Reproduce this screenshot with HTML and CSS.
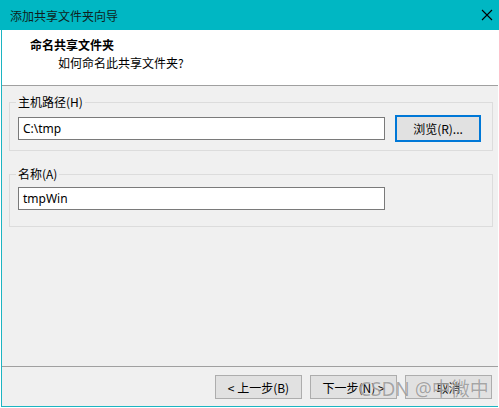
FILE: index.html
```html
<!DOCTYPE html>
<html lang="zh-CN">
<head>
<meta charset="utf-8">
<title>添加共享文件夹向导</title>
<link rel="stylesheet" href="styles.css">
</head>
<body>
<div class="window">
  <div class="titlebar">
    <span class="title">添加共享文件夹向导</span>
    <svg class="close" width="12" height="12" viewBox="0 0 12 12"><path d="M1 1L11 11M11 1L1 11" stroke="#000" stroke-width="1.1" fill="none"/></svg>
  </div>
  <div class="frame">
    <div class="header">
      <div class="heading">命名共享文件夹</div>
      <div class="sub">如何命名此共享文件夹?</div>
    </div>
    <div class="content">
      <fieldset class="group">
        <legend>主机路径(H)</legend>
        <div class="row">
          <div class="input">C:\tmp</div>
          <button class="btn browse">浏览(R)...</button>
        </div>
      </fieldset>
      <fieldset class="group group2">
        <legend>名称(A)</legend>
        <div class="row">
          <div class="input">tmpWin</div>
        </div>
      </fieldset>
    </div>
    <div class="footer">
      <button class="btn">&lt; 上一步(B)</button>
      <button class="btn">下一步(N) &gt;</button>
      <button class="btn">取消</button>
      <span class="watermark">CSDN @中微中</span>
    </div>
  </div>
</div>
</body>
</html>
```
FILE: styles.css
```css
html, body {
  margin: 0;
  padding: 0;
  background: #ffffff;
}
body {
  width: 499px;
  height: 408px;
  overflow: hidden;
  font-family: "Noto Sans CJK SC", "Noto Sans", sans-serif;
  font-size: 12px;
  color: #000;
}
.window {
  display: flex;
  flex-direction: column;
  height: 407px;
}
.titlebar {
  height: 30px;
  background: #00b7c3;
  display: flex;
  align-items: center;
  justify-content: space-between;
  padding: 0 6px 0 10px;
  box-sizing: border-box;
}
.title {
  font-size: 12px;
  color: #0f1f20;
}
.close {
  display: block;
}
.frame {
  flex: 1;
  display: flex;
  flex-direction: column;
  margin-left: 1px;
  margin-right: 1px;
  border-left: 1px solid #1cb4c2;
  border-bottom: 1px solid #1cb4c2;
  background: #f0f0f0;
}
.header {
  height: 56px;
  box-sizing: border-box;
  background: #fff;
  border-bottom: 1px solid #a0a0a0;
  padding: 6px 0 0 28px;
}
.heading {
  font-weight: bold;
  line-height: 18px;
}
.sub {
  padding-left: 28px;
  line-height: 17px;
}
.content {
  flex: 1;
  padding: 8px 5px 0 7px;
  display: flex;
  flex-direction: column;
  gap: 15px;
}
.group {
  margin: 0;
  border: 1px solid #dcdcdc;
  padding: 0 10px 8px 8px;
  min-width: 0;
}
.group legend {
  padding: 0 2px;
  margin-left: -2px;
  line-height: 16px;
}
.row {
  display: flex;
  align-items: center;
  gap: 10px;
  padding-top: 5px;
}
.group2 .row {
  padding-bottom: 8px;
}
.input {
  width: 367px;
  height: 23px;
  box-sizing: border-box;
  border: 1px solid #7a7a7a;
  background: #fff;
  padding: 0 4px;
  line-height: 21px;
  font-family: "Noto Sans", "Noto Sans CJK SC", sans-serif;
  font-size: 12px;
}
.btn {
  width: 87px;
  height: 24px;
  box-sizing: border-box;
  background: #e1e1e1;
  border: 1px solid #adadad;
  font-family: "Noto Sans CJK SC", "Noto Sans", sans-serif;
  font-size: 12px;
  color: #000;
  padding: 0;
  margin: 0;
}
.browse {
  width: 86px;
  height: 27px;
  border: 2px solid #0078d7;
}
.footer {
  position: relative;
  height: 40px;
  box-sizing: border-box;
  border-top: 1px solid #a0a0a0;
  display: flex;
  justify-content: flex-end;
  align-items: flex-start;
  gap: 8px;
  padding: 8px 6px 0 0;
}
.watermark {
  position: absolute;
  z-index: 2;
  left: 357px;
  top: 12px;
  line-height: 20px;
  font-family: "Noto Sans", "Noto Sans CJK SC", sans-serif;
  font-size: 19px;
  color: rgba(110, 110, 110, 0.6);
  text-shadow: 0 0 1px rgba(255, 255, 255, 0.8);
  pointer-events: none;
  white-space: nowrap;
}
```
